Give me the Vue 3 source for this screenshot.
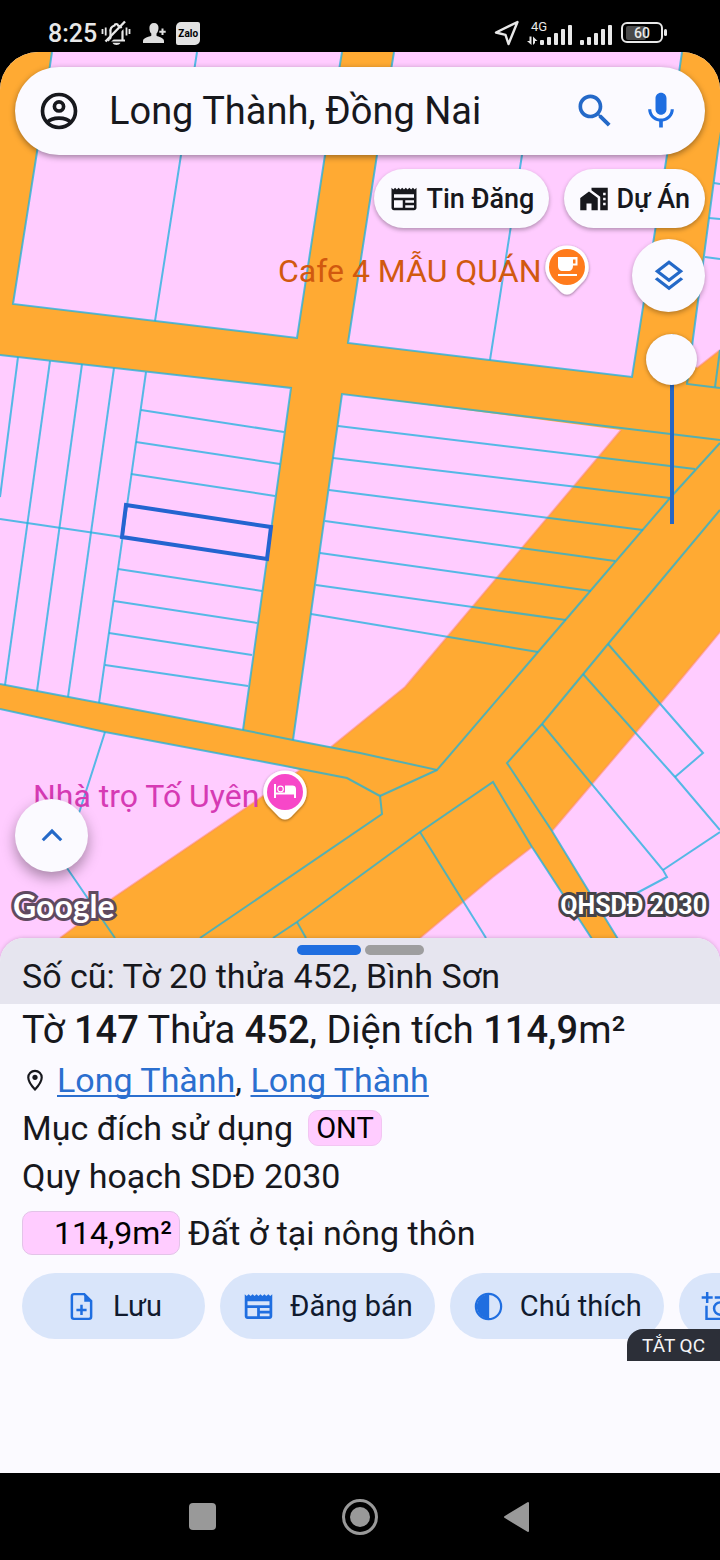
<template>
  <div class="phone">
    <header class="status-bar">
      <div class="status-bar__group">
        <span class="status-bar__time">8:25</span>
        <svg class="status-bar__bell" width="30" height="26" viewBox="0 0 30 26" fill="none" stroke="#e8e8e8" stroke-width="2.200">
          <path d="M7 20.500h17M9.500 20v-8a6 6 0 0 1 4-6.500c.3-2 3.200-2 3.500 0a6 6 0 0 1 4.500 6v8.500"></path>
          <path d="M7 23.500 26 4" stroke="#000" stroke-width="2"></path>
          <path d="M4.500 21.500 24 1.500" stroke-width="2.400"></path>
          <path d="M1.500 9v5M4.700 7.500v8M28.500 9v5M25.500 7.500v8" stroke-width="1.800"></path>
          <path d="M11.500 22.800h8c-1.500 3-6.500 3-8 0z" fill="#e8e8e8" stroke="none"></path>
        </svg>
        <svg class="status-bar__person" width="23" height="22" viewBox="0 0 23 22" fill="#dedede">
          <path d="M11 1c3 0 4.700 2 4.500 5-.2 3-1 4.500-2 5.600v2.200c2 1.200 7.500 2 7.500 5.200v2H0v-2c0-3.200 6-4 8.300-5.200v-2.200C7.200 10.500 6.500 9 6.400 6 6.300 3 8 1 11 1z"></path>
          <path d="M18.500 6.500h2v2.200h2.200v2h-2.200v2.200h-2v-2.200h-2.200v-2h2.200z"></path>
        </svg>
        <span class="status-bar__zalo">Zalo</span>
      </div>
      <div class="status-bar__group">
        <svg width="26" height="26" viewBox="0 0 26 26" fill="none" stroke="#e8e8e8" stroke-width="2.400" stroke-linejoin="round">
          <path d="M23.500 2 2 12.500l9.500 2.300L14.500 24z"></path>
        </svg>
        <svg class="status-bar__network" width="46" height="28" viewBox="0 0 46 28" fill="#e8e8e8">
          <text x="4" y="12" class="status-bar__tiny">4G</text>
          <path d="M2.500 17.500H4.500V26L0 22h2.500zM6 26v-8.500L10.500 22H8v2z"></path>
          <rect v-for="(bar, i) in signal" :key="i" :x="13 + i * 7" :y="26 - bar" width="4" :height="bar" rx="1"></rect>
        </svg>
        <svg class="status-bar__signal" width="32" height="28" viewBox="0 0 32 28" fill="#e8e8e8">
          <rect v-for="(bar, i) in signal" :key="i" :x="i * 7" :y="26 - bar" width="4" :height="bar" rx="1"></rect>
        </svg>
        <svg width="47" height="22" viewBox="0 0 47 22">
          <rect x="5" y="4" width="20" height="14" rx="2" fill="#4a4a4a"></rect>
          <rect x="1" y="1" width="40" height="19" rx="5" fill="none" stroke="#e8e8e8" stroke-width="2"></rect>
          <rect x="43" y="7" width="3" height="7" rx="1.500" fill="#e8e8e8"></rect>
          <text x="21" y="16" text-anchor="middle" class="status-bar__level">60</text>
        </svg>
      </div>
    </header>

    <main class="screen">
      <section class="map">
        <svg class="map__canvas" viewBox="0 52 720 910" preserveAspectRatio="xMidYMin slice">
          <defs>
            <filter id="pin-shadow" x="-30%" y="-30%" width="160%" height="160%">
              <feDropShadow dx="0" dy="1" stdDeviation="1.500" flood-opacity="0.45"></feDropShadow>
            </filter>
          </defs>
          <rect y="52" width="720" height="910" fill="#ffaa33"></rect>
          <polygon v-for="zone in zones" :key="zone" :points="zone" fill="#ffccff"></polygon>
          <polyline v-for="edge in zoneEdges" :key="edge" :points="edge" class="map__edge"></polyline>
          <polyline v-for="line in parcelLines" :key="line" :points="line" class="map__line"></polyline>
          <polygon class="map__selected" points="126,505 271,527 267,559 122,537"></polygon>

          <text x="278" y="282" class="map__label" fill="#d1590f">Cafe 4 MẪU QUÁN</text>
          <g filter="url(#pin-shadow)">
            <path d="M567 245.500a21.500 21.500 0 0 1 16.500 35.500L573 292q-6 5-12 0L550.500 281A21.500 21.500 0 0 1 567 245.500z" fill="#fff"></path>
          </g>
          <circle cx="567" cy="267" r="18" fill="#ff7b1c"></circle>
          <path d="M558 257h19.500v8.500h-4.500c0 3.500-1.500 5.500-5 5.500h-5c-3.500 0-5-2-5-5.500z" fill="#fff"></path>
          <path d="M573 259.500h2.500v4H573z" fill="#ff7b1c"></path>
          <path d="M558 274h19v2h-19z" fill="#fff"></path>

          <text x="33" y="807" class="map__label" fill="#d63ab4">Nhà trọ Tố Uyên</text>
          <g filter="url(#pin-shadow)">
            <path d="M285 770.500a21.500 21.500 0 0 1 16.500 35.500L291 817q-6 5-12 0L268.500 806A21.500 21.500 0 0 1 285 770.500z" fill="#fff"></path>
          </g>
          <circle cx="285" cy="792" r="18" fill="#f747c8"></circle>
          <path d="M274 784h2v10.500h18V798h2v-9c0-2.500-1.500-3.500-3.500-3.500H285v7h-9v5.500h-2z" fill="#fff"></path>
          <circle cx="280.500" cy="789" r="2.800" fill="none" stroke="#fff" stroke-width="1.200"></circle>
        </svg>

        <div class="map__overlay">
          <form class="search" @submit.prevent>
            <button class="search__button" type="button" aria-label="Tài khoản">
              <svg width="44" height="44" viewBox="0 0 24 24" fill="none" stroke="#17181d" stroke-width="2">
                <circle cx="12" cy="12" r="9"></circle>
                <circle cx="12" cy="9.500" r="2.500"></circle>
                <path d="M5.600 18.200C7 16.600 9.300 15.900 12 15.900s5 .7 6.400 2.300"></path>
              </svg>
            </button>
            <input v-model="query" class="search__input" type="text" aria-label="Tìm kiếm địa điểm">
            <button class="search__button" type="submit" aria-label="Tìm kiếm">
              <svg width="44" height="44" viewBox="0 0 24 24" fill="#2469c8">
                <path d="M15.500 14h-.79l-.28-.27C15.410 12.590 16 11.110 16 9.500 16 5.910 13.090 3 9.500 3S3 5.910 3 9.500 5.910 16 9.500 16c1.610 0 3.090-.59 4.230-1.570l.27.28v.79l5 4.990L20.490 19l-4.990-5zm-6 0C7.010 14 5 11.990 5 9.500S7.010 5 9.500 5 14 7.010 14 9.500 11.990 14 9.500 14z"></path>
              </svg>
            </button>
            <button class="search__button" type="button" aria-label="Tìm bằng giọng nói">
              <svg width="44" height="44" viewBox="0 0 24 24" fill="#1f6ee0">
                <path d="M12 14c1.660 0 3-1.340 3-3V5c0-1.660-1.340-3-3-3S9 3.340 9 5v6c0 1.660 1.340 3 3 3zm5.300-3c0 3-2.540 5.100-5.300 5.100S6.700 14 6.700 11H5c0 3.410 2.720 6.230 6 6.720V21h2v-3.280c3.280-.48 6-3.300 6-6.720h-1.700z"></path>
              </svg>
            </button>
          </form>

          <div class="chips">
            <button class="chip" type="button">
              <svg width="30" height="30" viewBox="0 0 24 24" fill="#17181d">
                <path :d="newspaperPath" fill-rule="evenodd"></path>
              </svg>
              Tin Đăng
            </button>
            <button class="chip" type="button">
              <svg width="30" height="30" viewBox="0 0 24 24" fill="#17181d">
                <path d="M1 11.200V21h5v-5.500h4V21h5v-9.800L8 6z"></path>
                <path d="M10 3v1.900l7 5.200V21h6V3zm11.300 14h-2v-2h2zm0-4h-2v-2h2zm0-4h-2V7h2z" fill-rule="evenodd"></path>
              </svg>
              Dự Án
            </button>
          </div>

          <div class="tools">
            <button class="round-button" type="button" aria-label="Lớp bản đồ">
              <svg width="38" height="38" viewBox="0 0 24 24" fill="#2469c8">
                <path d="M12 18.540 4.620 12.810 3 14.070l9 7 9-7-1.630-1.270zM12 16l7.360-5.730L21 9l-9-7-9 7 1.630 1.270zm0-11.470L17.740 9 12 13.470 6.260 9z" fill-rule="evenodd"></path>
              </svg>
            </button>
            <input v-model="opacity" class="opacity" type="range" min="0" max="100" aria-label="Độ mờ lớp quy hoạch">
          </div>

          <div class="map__footer">
            <button class="round-button round-button--raised" type="button" aria-label="Mở rộng">
              <svg width="34" height="34" viewBox="0 0 24 24" fill="none" stroke="#2469c8" stroke-width="2.200">
                <path d="m5.500 15 6.500-6.500 6.500 6.500"></path>
              </svg>
            </button>
            <div class="map__credits">
              <span class="map__google">Google</span>
              <span class="map__layer">QHSDĐ 2030</span>
            </div>
          </div>
        </div>
      </section>

      <section class="sheet">
        <div class="sheet__header">
          <div class="sheet__pages">
            <span class="sheet__page sheet__page--active"></span>
            <span class="sheet__page"></span>
          </div>
          <p class="sheet__old">Số cũ: Tờ 20 thửa 452, Bình Sơn</p>
        </div>

        <div class="sheet__body">
          <h1 class="sheet__title">Tờ <b>147</b> Thửa <b>452</b>, Diện tích <b>114,9</b>m²</h1>
          <p class="sheet__row">
            <svg class="sheet__pin" width="26" height="26" viewBox="0 0 24 24" fill="none" stroke="#17181d" stroke-width="2">
              <path d="M12 20.800C8 16.500 5.800 12.900 5.800 9.700a6.200 6.200 0 0 1 12.400 0c0 3.200-2.200 6.800-6.200 11.100z"></path>
              <circle cx="12" cy="9.500" r="2.400" fill="#17181d" stroke="none"></circle>
            </svg>
            <span><a href="#">Long Thành</a>, <a href="#">Long Thành</a></span>
          </p>
          <p class="sheet__row">Mục đích sử dụng <span class="tag">ONT</span></p>
          <p class="sheet__row">Quy hoạch SDĐ 2030</p>
          <p class="sheet__zoning"><span class="area">114,9m²</span>Đất ở tại nông thôn</p>
        </div>

        <div class="actions">
          <button class="action" type="button">
            <svg width="33" height="33" viewBox="0 0 24 24" fill="none" stroke="#1f6ee0" stroke-width="1.800">
              <path d="M14 3H6.500A1.500 1.500 0 0 0 5 4.500v15A1.500 1.500 0 0 0 6.500 21h11a1.500 1.500 0 0 0 1.500-1.500V8z"></path>
              <path d="M14 2.500V8.500h5.500z" fill="#1f6ee0" stroke="none"></path>
              <path d="M12 10.800v7.400M8.300 14.500h7.400"></path>
            </svg>
            Lưu
          </button>
          <button class="action" type="button">
            <svg width="33" height="33" viewBox="0 0 24 24" fill="#1f6ee0">
              <path :d="newspaperPath" fill-rule="evenodd"></path>
            </svg>
            Đăng bán
          </button>
          <button class="action" type="button">
            <svg width="33" height="33" viewBox="0 0 24 24" fill="#1f6ee0">
              <circle cx="12" cy="12" r="9.200" fill="none" stroke="#1f6ee0" stroke-width="1.600"></circle>
              <path d="M12.500 3a9 9 0 1 0 0 18z"></path>
            </svg>
            Chú thích
          </button>
          <button class="action" type="button" aria-label="Chụp ảnh">
            <svg width="33" height="33" viewBox="0 0 24 24" fill="none" stroke="#1f6ee0" stroke-width="1.800">
              <path d="M4.500 1.500v8M.5 5.500h8M10 5.500h10.500A1.500 1.500 0 0 1 22 7v12.500a1.500 1.500 0 0 1-1.500 1.500H4V11.500"></path>
              <circle cx="14" cy="13.500" r="4.500"></circle>
            </svg>
          </button>
        </div>
        <button class="ads-off" type="button">TẮT QC</button>
      </section>
    </main>

    <nav class="nav-bar">
      <button class="nav-bar__button" type="button" aria-label="Gần đây">
        <svg width="44" height="44" viewBox="0 0 44 44" fill="#999">
          <rect x="8" y="8" width="27" height="27" rx="4"></rect>
        </svg>
      </button>
      <button class="nav-bar__button" type="button" aria-label="Trang chủ">
        <svg width="44" height="44" viewBox="0 0 44 44" fill="#999">
          <circle cx="22" cy="22" r="16.500" fill="none" stroke="#999" stroke-width="3"></circle>
          <circle cx="22" cy="22" r="10"></circle>
        </svg>
      </button>
      <button class="nav-bar__button" type="button" aria-label="Quay lại">
        <svg width="44" height="44" viewBox="0 0 44 44" fill="#999" stroke="#999" stroke-width="2" stroke-linejoin="round">
          <path d="M10 22 33 8v28z"></path>
        </svg>
      </button>
    </nav>
  </div>
</template>

<script setup>
import { ref } from 'vue';

const query = ref('Long Thành, Đồng Nai');
const opacity = ref(0);

const signal = [5, 8, 12, 16, 20];

const newspaperPath = 'M2 3l1.430 1.400L4.860 3l1.430 1.400L7.710 3l1.430 1.400L10.570 3 12 4.400 13.430 3l1.430 1.400L16.290 3l1.420 1.400L19.140 3l1.430 1.400L22 3v16c0 1.100-.9 2-2 2H4c-1.100 0-2-.9-2-2zM4 8.200v2.800h16V8.200zM4 13v6h7v-6zm9 0v2h7v-2zm0 4v2h7v-2z';

// Residential land, everything else on the map is road
const zones = [
  '52,52 342,52 325,155 297,338 13,304 37,152',
  '394,52 682,52 667,155 632,377 348,343 377,155',
  '734,52 718,150 690,360 697,368 720,350',
  '0,355 291,388 243,730 0,684',
  '342,394 621,430 405,687 331,747 293,740',
  '0,709 105,732 280,765 300,770 253,803 113,898 60,938 30,962 0,962',
  '720,632 672,690 552,831 632,962 720,962',
  '532,847 493,877 463,902 420,938 392,962 607,962'
];

const zoneEdges = [
  '621,430 405,687 331,747',
  '300,770 253,803 113,898 60,938',
  '720,632 672,690 552,831',
  '532,847 493,877 463,902 420,938',
  '720,350 697,368'
];

const parcelLines = [
  // upper blocks
  '52,52 37,152 13,304 297,338 325,155 342,52',
  '197,52 181,155 155,321',
  '394,52 377,155 348,343 632,377 667,155 682,52',
  '529,100 522,155 490,360',
  '734,52 718,150 687,384 720,388',
  '714,183 720,184',
  '709,218 720,219',
  '705,257 720,259',
  '715,387 720,350',
  // left block
  '0,355 291,388 243,730',
  '18,357 0,497',
  '50,361 5,685',
  '82,364 37,691',
  '114,368 68,697',
  '146,372 99,703',
  '0,519 122,537',
  '141,410 284,432',
  '136,442 280,464',
  '131,474 275,496',
  '118,569 262,591',
  '114,601 257,623',
  '109,633 252,655',
  '105,665 248,686',
  // central block
  '293,740 342,394 720,440',
  '338,426 695,469',
  '333,458 670,498',
  '329,490 643,530',
  '325,521 615,561',
  '320,553 591,591',
  '316,585 566,620',
  '311,614 538,652',
  // roads
  '0,684 243,730 293,740 360,753 437,770 538,652 670,498 720,443',
  '0,709 105,732 280,765 347,778 380,796 382,814 200,938',
  '437,770 380,796',
  '720,510 608,644 542,724 507,763 552,831 632,962',
  '607,962 532,847 493,782 420,832 297,922 273,938',
  '297,922 306,938',
  '105,732 80,810 62,862 67,868 115,938',
  // lower right parcels
  '420,832 486,938',
  '542,724 663,870 667,877 635,894',
  '663,870 720,832',
  '583,674 675,777 720,830',
  '608,644 703,753 675,777'
];
</script>

<style scoped>
.phone {
  display: flex;
  flex-direction: column;
  min-height: 100vh;
  background: #000;
  color: #17181d;
  font-family: Roboto, "Noto Sans", sans-serif;
}

button {
  display: flex;
  align-items: center;
  justify-content: center;
  padding: 0;
  border: 0;
  background: none;
  color: inherit;
  font: inherit;
  cursor: pointer;
}

svg {
  flex-shrink: 0;
}

p,
h1 {
  margin: 0;
  font-weight: 400;
}

/* Status bar */
.status-bar {
  display: flex;
  align-items: center;
  justify-content: space-between;
  height: 38px;
  padding: 14px 52px 0 48px;
  color: #e8e8e8;
}

.status-bar__group {
  display: flex;
  align-items: center;
}

.status-bar__time {
  font-size: 25px;
  font-weight: 500;
}

.status-bar__bell {
  margin-left: 4px;
}

.status-bar__person {
  margin: 0 10px 0 12px;
}

.status-bar__zalo {
  width: 24px;
  border-radius: 5px 2px 5px 2px;
  background: #e2e2e2;
  color: #000;
  font-size: 10px;
  font-weight: 700;
  line-height: 23px;
  text-align: center;
}

.status-bar__tiny {
  font-size: 13px;
}

.status-bar__network {
  margin-left: 7px;
}

.status-bar__signal {
  margin: 0 9px 0 7px;
}

.status-bar__level {
  fill: #e8e8e8;
  font-size: 14px;
  font-weight: 500;
}

/* Map */
.screen {
  display: flex;
  flex: 1;
  flex-direction: column;
  overflow: hidden;
  border-radius: 38px 38px 0 0;
  background: #fbfaff;
}

.map {
  position: relative;
  display: flex;
  flex: 1;
  min-height: 640px;
}

.map__canvas {
  position: absolute;
  inset: 0;
  width: 100%;
  height: 100%;
}

.map__edge {
  fill: none;
  stroke: #ff8a6b;
  stroke-width: 2;
  stroke-opacity: 0.5;
}

.map__line {
  fill: none;
  stroke: #1cb2dc;
  stroke-width: 2;
  stroke-opacity: 0.75;
}

.map__selected {
  fill: none;
  stroke: #2464d0;
  stroke-width: 4;
}

.map__label {
  font-size: 32px;
}

.map__overlay {
  position: relative;
  display: flex;
  flex: 1;
  flex-direction: column;
  min-width: 0;
  padding: 15px 15px 38px;
}

.search {
  display: flex;
  align-items: center;
  height: 88px;
  padding: 0 22px;
  border-radius: 44px;
  background: #fbfaff;
  box-shadow: 0 2px 6px rgba(0, 0, 0, 0.4);
}

.search__button + .search__button {
  margin-left: 22px;
}

.search__input {
  flex: 1;
  min-width: 0;
  margin: 0 16px 0 28px;
  padding: 0;
  border: 0;
  outline: 0;
  background: none;
  color: inherit;
  font: inherit;
  font-size: 38px;
}

.chips {
  display: flex;
  justify-content: flex-end;
  gap: 15px;
  margin-top: 14px;
}

.chip {
  gap: 7px;
  height: 59px;
  padding: 0 15px;
  border-radius: 30px;
  background: #fbfaff;
  box-shadow: 0 2px 4px rgba(0, 0, 0, 0.3);
  font-size: 27px;
  font-weight: 500;
}

.tools {
  display: flex;
  flex-direction: column;
  align-items: flex-end;
  gap: 22px;
  margin-top: 11px;
}

.round-button {
  width: 73px;
  height: 73px;
  border-radius: 50%;
  background: #fbfaff;
  box-shadow: 0 2px 5px rgba(0, 0, 0, 0.3);
}

.round-button--raised {
  box-shadow: 0 6px 14px rgba(0, 0, 0, 0.35);
}

.opacity {
  width: 51px;
  height: 190px;
  margin: 0 8px 0 0;
  appearance: none;
  background: linear-gradient(#2566c4, #2566c4) center / 4px 100% no-repeat;
  writing-mode: vertical-lr;
}

.opacity::-webkit-slider-thumb {
  width: 51px;
  height: 51px;
  border-radius: 50%;
  appearance: none;
  background: #fbfaff;
  box-shadow: 0 1px 4px rgba(0, 0, 0, 0.35);
}

.map__footer {
  display: flex;
  flex-direction: column;
  gap: 16px;
  margin-top: auto;
}

.map__credits {
  display: flex;
  align-items: center;
  justify-content: space-between;
  margin: 0 -2px;
  color: #fff;
  line-height: 36px;
  paint-order: stroke fill;
}

.map__google {
  font-family: Lato, sans-serif;
  font-size: 32px;
  font-weight: 700;
  -webkit-text-stroke: 6px #5f4a60;
}

.map__layer {
  font-size: 25px;
  font-weight: 700;
  -webkit-text-stroke: 6px #45434a;
}

/* Bottom sheet */
.sheet {
  position: relative;
  margin-top: -24px;
  padding-bottom: 134px;
  border-radius: 24px 24px 0 0;
  background: #fbfaff;
  box-shadow: 0 0 4px rgba(0, 0, 0, 0.2);
  font-size: 34px;
}

.sheet__header {
  padding: 7px 22px;
  border-radius: 24px 24px 0 0;
  background: #e6e5ef;
}

.sheet__pages {
  display: flex;
  justify-content: center;
  gap: 4px;
}

.sheet__page {
  width: 59px;
  height: 10px;
  border-radius: 5px;
  background: #9e9e9f;
}

.sheet__page--active {
  width: 64px;
  background: #1f6ee0;
}

.sheet__old {
  line-height: 42px;
}

.sheet__body {
  padding: 0 22px;
}

.sheet__title {
  font-size: 38px;
  line-height: 52px;
}

.sheet__title b {
  font-weight: 500;
}

.sheet__row {
  display: flex;
  align-items: center;
  line-height: 48px;
}

.sheet__row a {
  color: #2b6fcf;
  text-decoration-thickness: 2px;
  text-underline-offset: 3px;
  text-decoration-skip-ink: none;
}

.sheet__pin {
  margin-right: 9px;
}

.tag {
  margin-left: 15px;
  padding: 0 7px;
  border: 1px solid #f2c6f2;
  border-radius: 10px;
  background: #ffccff;
  color: #000;
  font-size: 29px;
  line-height: 34px;
}

.sheet__zoning {
  display: flex;
  align-items: center;
  gap: 8px;
  margin-top: 11px;
  line-height: 44px;
}

.area {
  box-sizing: border-box;
  min-width: 158px;
  padding: 0 7px;
  border: 1px solid #e3c3e8;
  border-radius: 10px;
  background: #ffccff;
  color: #000;
  font-size: 32px;
  line-height: 42px;
  text-align: right;
}

.actions {
  display: flex;
  gap: 15px;
  margin-top: 18px;
  padding: 0 22px;
  overflow-x: auto;
  scrollbar-width: none;
}

.action {
  flex-shrink: 0;
  gap: 15px;
  min-width: 183px;
  height: 66px;
  padding: 0 22px;
  border-radius: 33px;
  background: #d9e5fa;
  color: #101a2e;
  font-size: 29px;
}

.action:last-child {
  justify-content: flex-start;
}

.ads-off {
  position: absolute;
  right: 0;
  bottom: 112px;
  height: 32px;
  padding: 0 15px;
  border-radius: 16px 0 0;
  background: #2c2f38;
  color: #f4f4f6;
  font-size: 19px;
}

/* System navigation */
.nav-bar {
  display: flex;
  align-items: center;
  justify-content: center;
  gap: 113px;
  height: 87px;
}
</style>

<style>
body {
  margin: 0;
  background: #000;
}
</style>
